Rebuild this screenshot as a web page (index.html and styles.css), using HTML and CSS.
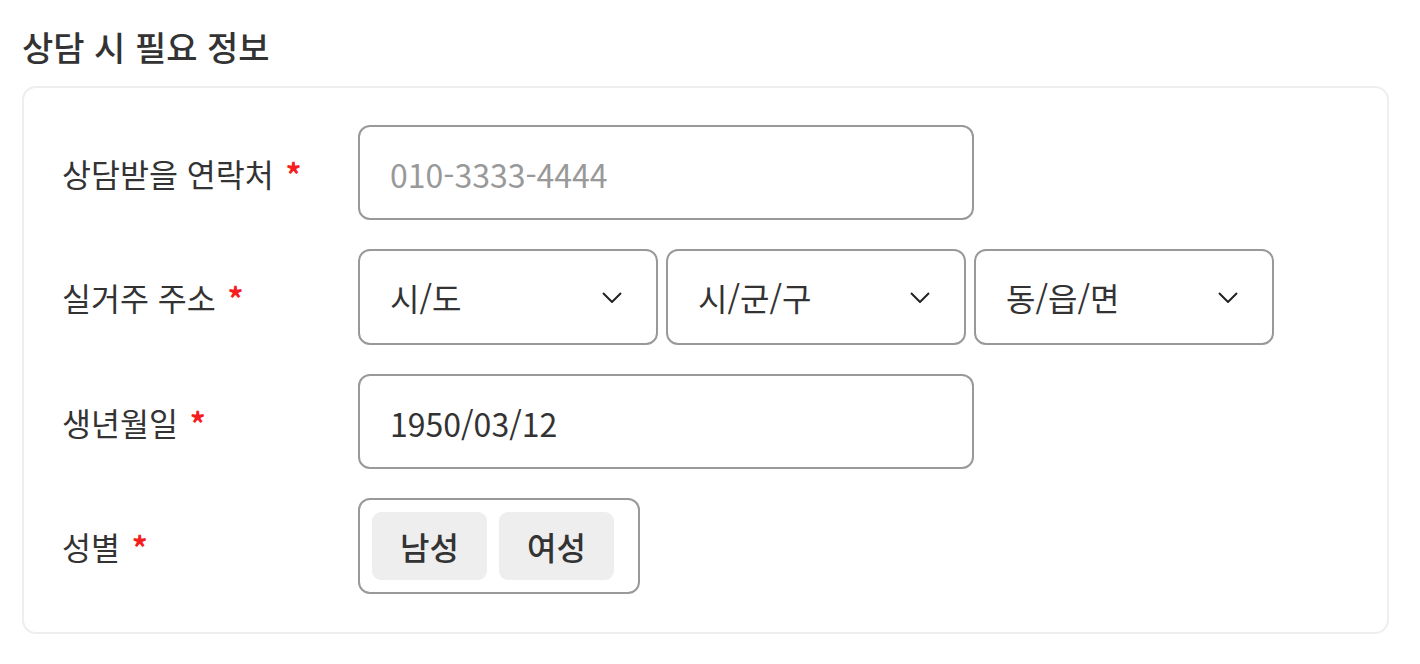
FILE: index.html
```html
<!DOCTYPE html>
<html lang="ko">
<head>
    <meta charset="UTF-8">
    <meta name="viewport" content="width=device-width, initial-scale=1.0">
    <title>상담 시 필요 정보</title>
    <link rel="stylesheet" href="styles.css">
</head>
<body>
    <section class="consult">
        <h2 class="consult-title">상담 시 필요 정보</h2>
        <div class="form-card">
            <div class="form-row">
                <label class="form-label" for="phone">상담받을 연락처 <span class="req">*</span></label>
                <input type="text" id="phone" class="field field-wide" placeholder="010-3333-4444">
            </div>
            <div class="form-row">
                <span class="form-label">실거주 주소 <span class="req">*</span></span>
                <div class="select-group">
                    <div class="select-box">
                        <span>시/도</span>
                        <svg class="chevron" viewBox="0 0 20 11"><path d="M1 1 L10 10 L19 1" /></svg>
                    </div>
                    <div class="select-box">
                        <span>시/군/구</span>
                        <svg class="chevron" viewBox="0 0 20 11"><path d="M1 1 L10 10 L19 1" /></svg>
                    </div>
                    <div class="select-box">
                        <span>동/읍/면</span>
                        <svg class="chevron" viewBox="0 0 20 11"><path d="M1 1 L10 10 L19 1" /></svg>
                    </div>
                </div>
            </div>
            <div class="form-row">
                <label class="form-label" for="birth">생년월일 <span class="req">*</span></label>
                <input type="text" id="birth" class="field field-wide" value="1950/03/12">
            </div>
            <div class="form-row">
                <span class="form-label">성별 <span class="req">*</span></span>
                <div class="gender-group">
                    <button type="button" class="gender-btn">남성</button>
                    <button type="button" class="gender-btn">여성</button>
                </div>
            </div>
        </div>
    </section>
</body>
</html>
```

FILE: styles.css
```css
body {
    margin: 0;
    background: #fff;
    font-family: "Noto Sans CJK KR", "Noto Sans", sans-serif;
    color: #333;
}
.consult {
    padding: 23px 31px 0 22px;
}
.consult-title {
    margin: 0 0 15px;
    font-size: 34px;
    font-weight: 500;
    line-height: 48px;
    color: #333;
}
.form-card {
    border: 2px solid #eee;
    border-radius: 14px;
    padding: 37px 38px 38px;
    display: flex;
    flex-direction: column;
    gap: 29px;
}
.form-row {
    display: flex;
    align-items: center;
}
.form-label {
    width: 296px;
    font-size: 31.5px;
    color: #333;
}
.req {
    margin-left: 3px;
    color: #f51d1d;
    font-weight: 700;
}
.field {
    box-sizing: border-box;
    height: 95px;
    border: 2px solid #999;
    border-radius: 12px;
    padding: 2px 30px 0;
    font-family: inherit;
    font-size: 32px;
    color: #333;
    background: #fff;
    outline: none;
}
.field::placeholder {
    color: #999;
}
.field-wide {
    width: 616px;
}
.select-group {
    display: flex;
    gap: 8px;
}
.select-box {
    box-sizing: border-box;
    width: 300px;
    height: 96px;
    border: 2px solid #999;
    border-radius: 12px;
    padding: 0 34px 0 30px;
    display: flex;
    align-items: center;
    justify-content: space-between;
    font-size: 32px;
    color: #333;
}
.chevron {
    width: 20px;
    height: 11px;
    fill: none;
    stroke: #222;
    stroke-width: 2;
}
.gender-group {
    box-sizing: border-box;
    width: 282px;
    height: 96px;
    border: 2px solid #999;
    border-radius: 12px;
    padding: 12px;
    display: flex;
    gap: 12px;
}
.gender-btn {
    width: 115px;
    height: 68px;
    border: none;
    border-radius: 9px;
    background: #eee;
    font-family: inherit;
    font-size: 32px;
    font-weight: 500;
    color: #333;
    padding: 0;
}
```
